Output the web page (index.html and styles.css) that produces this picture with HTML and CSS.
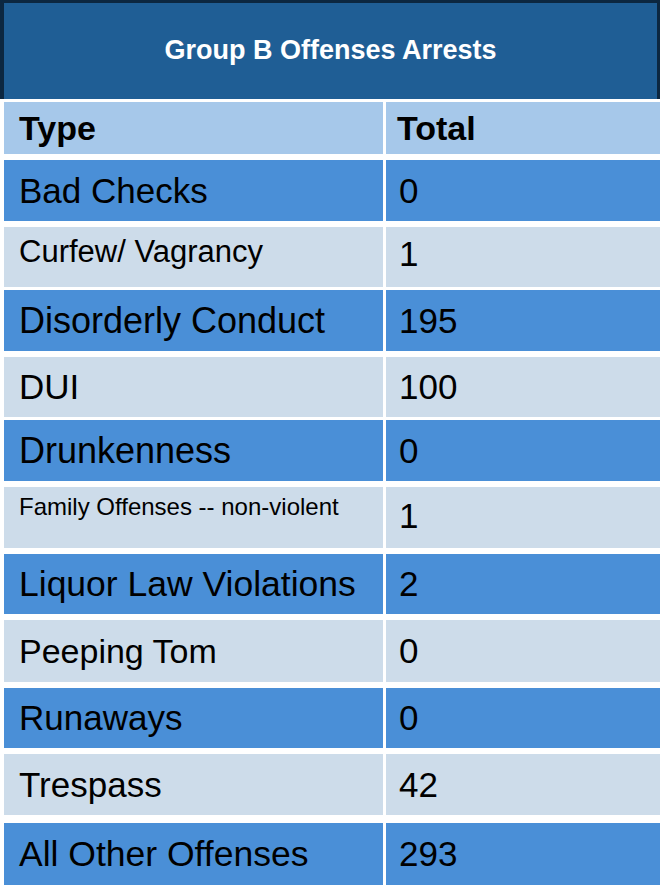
FILE: index.html
```html
<!DOCTYPE html>
<html>
<head>
<meta charset="utf-8">
<link rel="stylesheet" href="styles.css">
</head>
<body>
<div class="sheet">
  <div class="title">Group B Offenses Arrests</div>
  <div class="table">
    <div class="row head"><div class="cell type">Type</div><div class="cell num">Total</div></div>
    <div class="row dark"><div class="cell type f35">Bad Checks</div><div class="cell num">0</div></div>
    <div class="row light h60"><div class="cell type f31 up">Curfew/ Vagrancy</div><div class="cell num low">1</div></div>
    <div class="row dark tight"><div class="cell type f36">Disorderly Conduct</div><div class="cell num">195</div></div>
    <div class="row light h60"><div class="cell type f35">DUI</div><div class="cell num">100</div></div>
    <div class="row dark tight"><div class="cell type f36">Drunkenness</div><div class="cell num">0</div></div>
    <div class="row light"><div class="cell type f24 top">Family Offenses -- non-violent</div><div class="cell num low2">1</div></div>
    <div class="row dark h60"><div class="cell type f355">Liquor Law Violations</div><div class="cell num">2</div></div>
    <div class="row light h62"><div class="cell type f34">Peeping Tom</div><div class="cell num">0</div></div>
    <div class="row dark h60"><div class="cell type f35">Runaways</div><div class="cell num">0</div></div>
    <div class="row light"><div class="cell type f35">Trespass</div><div class="cell num">42</div></div>
    <div class="row dark loose h62"><div class="cell type f355">All Other Offenses</div><div class="cell num">293</div></div>
  </div>
</div>
</body>
</html>
```
FILE: styles.css
```css
* { box-sizing: border-box; }
html, body { margin: 0; padding: 0; background: #ffffff; }
body { font-family: "Liberation Sans", Arial, sans-serif; color: #000; width: 660px; height: 886px; overflow: hidden; }
.sheet { display: flex; flex-direction: column; }
.title {
  height: 99px;
  background: #1f5e95;
  border: 3px solid #0c2740;
  border-left-width: 4px;
  border-bottom: none;
  color: #fff;
  font-weight: bold;
  font-size: 27px;
  display: flex; align-items: center; justify-content: center;
  padding-bottom: 2px;
}
.table { display: flex; flex-direction: column; padding-left: 4px; margin-top: 3px; }
.row { display: grid; grid-template-columns: 379px 1fr; column-gap: 3px; height: 61px; margin-top: 6px; }
.row.head { height: 52px; margin-top: 0; }
.row.h60 { height: 60px; }
.row.h62 { height: 62px; }
.row.tight { margin-top: 3px; }
.row.loose { margin-top: 8px; }
.cell { display: flex; align-items: center; padding-left: 15px; }
.cell.num { padding-left: 13px; font-size: 35px; }
.head .cell { background: #a6c8ea; font-weight: bold; font-size: 34px; }
.head .cell.num { padding-left: 11px; }
.dark .cell { background: #4a8fd7; }
.light .cell { background: #cddcea; }
.f24 { font-size: 24px; }
.f31 { font-size: 31px; }
.f34 { font-size: 34px; }
.f35 { font-size: 35px; }
.f355 { font-size: 35.5px; }
.f36 { font-size: 36px; }
.up { padding-bottom: 10px; }
.top { align-items: flex-start; padding-top: 6px; }
.low { padding-top: 0; padding-bottom: 6px; }
.low2 { padding-top: 0; padding-bottom: 4px; }
```
